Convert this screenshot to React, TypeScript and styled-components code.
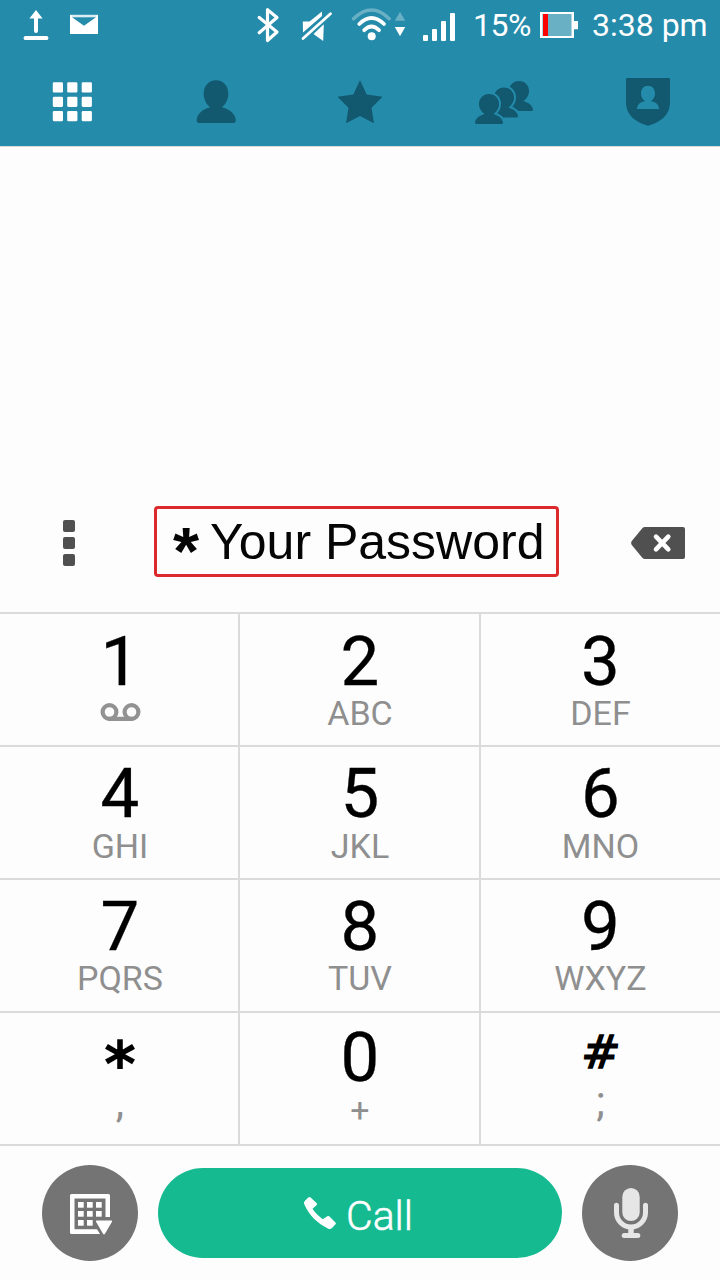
import React from "react";
import styled, { createGlobalStyle } from "styled-components";

const GlobalStyle = createGlobalStyle`
  * { box-sizing: border-box; }
  body { margin: 0; background: #fdfdfd; }
  button { border: 0; padding: 0; margin: 0; background: none; font: inherit; color: inherit; }
  svg { display: block; flex: none; }
`;

const DARK = "#12586e";

const Screen = styled.div`
  width: 720px;
  height: 1280px;
  display: flex;
  flex-direction: column;
  background: #fdfdfd;
  font-family: Roboto, "Liberation Sans", sans-serif;
  overflow: hidden;
`;

const Header = styled.header`
  height: 147px;
  background: #248bab;
  border-bottom: 1px solid #d5dcde;
`;

const StatusBar = styled.div`
  height: 50px;
  display: flex;
  align-items: flex-start;
  color: #fff;
`;

const StatusGroup = styled.div<{ $push?: boolean }>`
  display: flex;
  margin-left: ${(p) => (p.$push ? "auto" : "0")};
`;

const StatusText = styled.span<{ $width: number; $tight?: boolean }>`
  width: ${(p) => p.$width}px;
  font-size: 32px;
  line-height: 50px;
  height: 50px;
  letter-spacing: ${(p) => (p.$tight ? "-0.5px" : "0")};
  white-space: nowrap;
`;

const Tabs = styled.nav`
  display: grid;
  grid-template-columns: repeat(5, 144px);
  height: 96px;
`;

const Tab = styled.button`
  height: 96px;
`;

const EntryArea = styled.section`
  height: 465px;
  display: flex;
  align-items: flex-end;
  padding: 0 35px 35px 63px;
`;

const EntryRow = styled.div`
  flex: 1;
  height: 71px;
  display: flex;
  align-items: center;
`;

const MenuButton = styled.button`
  width: 12px;
  display: flex;
  flex-direction: column;
  gap: 5px;
  margin: 3px 79px 0 0;
`;

const MenuDot = styled.span`
  width: 12px;
  height: 12px;
  border-radius: 2px;
  background: #505050;
`;

const EntryBox = styled.div`
  width: 405px;
  height: 71px;
  border: 3px solid #dc2a2c;
  border-radius: 4px;
  display: flex;
  padding-left: 16px;
  color: #050505;
  font-family: "Liberation Sans", Arial, sans-serif;
  white-space: nowrap;
`;

const EntryStar = styled.span`
  width: 37px;
  font-size: 67px;
  font-weight: 700;
  line-height: 84px;
  height: 65px;
`;

const EntryText = styled.span`
  font-size: 50px;
  line-height: 66px;
  height: 65px;
`;

const DeleteButton = styled.button`
  margin: 3px 0 0 auto;
`;

const Keypad = styled.section`
  display: grid;
  grid-template-columns: 240px 241px 239px;
  grid-auto-rows: 133px;
  height: 534px;
  border-bottom: 2px solid #dbdbdb;
`;

const Key = styled.button<{ $top: number; $column: number }>`
  display: flex;
  flex-direction: column;
  align-items: center;
  border-top: 2px solid #dbdbdb;
  border-right: ${(p) => (p.$column === 2 ? "0" : "2px solid #dbdbdb")};
  padding-top: ${(p) => p.$top}px;
  padding-left: ${(p) => [2, 1, 0][p.$column]}px;
`;

const Digit = styled.span`
  font-size: 69px;
  line-height: 72px;
  height: 72px;
  color: #000;
  -webkit-text-stroke: 0.3px #000;
`;

const Sign = styled(Digit)<{ $size: number; $line: number; $stroke: number; $skew?: number }>`
  font-family: "DejaVu Sans", sans-serif;
  font-size: ${(p) => p.$size}px;
  line-height: ${(p) => p.$line}px;
  -webkit-text-stroke: ${(p) => p.$stroke}px #000;
  transform: skewX(${(p) => p.$skew ?? 0}deg);
`;

const Letters = styled.span<{ $gap?: number; $size?: number }>`
  margin-top: ${(p) => p.$gap ?? 0}px;
  font-size: ${(p) => p.$size ?? 34}px;
  line-height: 33px;
  height: 33px;
  color: #8f8f8f;
`;

const Actions = styled.footer`
  height: 134px;
  display: flex;
  align-items: center;
  padding-left: 42px;
  gap: 20px;
`;

const RoundButton = styled.button`
  width: 96px;
  height: 96px;
  border-radius: 50%;
  background: #747474;
`;

const CallButton = styled.button`
  width: 404px;
  height: 90px;
  border-radius: 45px;
  background: #15ba91;
  color: #fff;
  display: flex;
  align-items: center;
  padding-left: 146px;
`;

const CallLabel = styled.span`
  margin: 5px 0 0 10px;
  font-size: 41px;
  font-weight: 300;
  line-height: 50px;
  -webkit-text-stroke: 0.5px #fff;
`;

const NoticeIcons = () => (
  <svg width="110" height="50" viewBox="0 0 110 50" fill="#fff">
    <path d="M36 10 42.6 18.6H38V31Q38 33 36 33T34 31V18.6H29.4Z" />
    <rect x="23.7" y="36" width="24.6" height="4" rx="1.6" />
    <path d="M70 14.8H98V34H70Z" />
    <path d="M72 17.3H96L84 25.8Z" fill="#248bab" />
    <path d="M71.5 16H96.5" stroke="#b5dbe6" strokeWidth="1" />
  </svg>
);

const SignalIcons = () => (
  <svg width="223" height="50" viewBox="250 0 223 50" fill="none" stroke="#fff" strokeLinecap="round" strokeLinejoin="round">
    <path d="M259.2 17.5 277 32 267.5 40.5V9.7L277 17.5 259.2 32.8" strokeWidth="3.2" />
    <path d="M302.8 21.5H309.5L322 11.5V16L303 32.5Z" fill="#fff" stroke="none" />
    <path d="M313.5 34 323.8 24.3 323.2 41Z" fill="#fff" stroke="none" />
    <path d="M303 38.5 330.5 13.8" strokeWidth="2.8" />
    <path d="M353.5 18.8Q371.5 1.2 389.2 18.8" stroke="#69b0c5" strokeWidth="3.4" />
    <path d="M359.3 24Q371.5 12 384 24" strokeWidth="3.8" />
    <path d="M364.2 30.2Q371.5 23 379 30.2" strokeWidth="3.8" />
    <circle cx="371.7" cy="36.3" r="4" fill="#fff" stroke="none" />
    <path d="M400 11.8 405.2 20.8H394.8Z" fill="#69b0c5" stroke="none" />
    <path d="M394.8 27H405.2L400 36.3Z" fill="#fff" stroke="none" />
    <g fill="#fff" stroke="none">
      <rect x="423" y="35" width="5" height="6" rx="1" />
      <rect x="432" y="29" width="5" height="12" rx="1" />
      <rect x="441" y="21" width="5" height="20" rx="1" />
      <rect x="450" y="13" width="5" height="28" rx="1" />
    </g>
  </svg>
);

const BatteryIcon = () => (
  <svg width="56" height="50" viewBox="536 0 56 50">
    <path d="M540 12H574V21H578V29.3H574V38H540Z" fill="#fff" />
    <rect x="542.5" y="14" width="29" height="22" fill="#69b0c5" />
    <rect x="543" y="14" width="5" height="22" fill="#fa0300" />
  </svg>
);

const GridIcon = () => (
  <svg width="144" height="96" viewBox="0 50 144 96" fill="#fff">
    {[82.3, 96.7, 111].map((y) =>
      [52.8, 67.2, 81.7].map((x) => <rect key={`${x}-${y}`} x={x} y={y} width="10.2" height="10.2" rx="1.3" />)
    )}
  </svg>
);

const PersonIcon = () => (
  <svg width="144" height="96" viewBox="144 50 144 96" fill={DARK}>
    <path d="M216 80.2C223.500 80.200 228.300 86 228.300 93.800 228.300 100.500 225 104.800 221.700 107.300 229.500 109 235.800 114.500 235.800 120.500Q235.800 123 233.500 123H199Q196.700 123 196.700 120.500C196.700 114.500 202.500 109 210.300 107.300 207 104.800 203.700 100.500 203.700 93.800 203.700 86 208.500 80.200 216 80.200Z" />
  </svg>
);

const StarIcon = () => (
  <svg width="144" height="96" viewBox="288 50 144 96" fill={DARK}>
    <path d="M360 80.300 366.700 94.500 382.500 96.700 371.500 107.700 374 123.300 360 116 346 123.300 348.500 107.700 337.500 96.700 353.300 94.500Z" />
  </svg>
);

const groupFigure =
  "M489 94C495 94 499 98.500 499 104 499 108.500 496.500 111.800 493.500 114 498.500 115.500 502.500 118.500 503 122.500Q503 124 501.500 124H476.500Q475 124 475 122.500C475.500 118.500 479.500 115.500 484.500 114 481.500 111.800 479 108.500 479 104 479 98.500 483 94 489 94Z";

const GroupIcon = () => (
  <svg width="144" height="96" viewBox="432 50 144 96" fill={DARK}>
    <path d={groupFigure} transform="translate(30 -13)" />
    <path d={groupFigure} transform="translate(15 -6.500)" stroke="#248bab" strokeWidth="4" />
    <path d={groupFigure} transform="translate(15 -6.500)" />
    <path d={groupFigure} stroke="#248bab" strokeWidth="4" />
    <path d={groupFigure} />
  </svg>
);

const ShieldIcon = () => (
  <svg width="144" height="96" viewBox="576 50 144 96">
    <path d="M627 78H669Q670 78 670 79V102C670 115.500 660 122.500 648 125.700 636 122.500 626 115.500 626 102V79Q626 78 627 78Z" fill={DARK} />
    <path d="M648 85.800C652.500 85.800 655 89.300 655 93.500 655 96.800 653.500 99.500 650.800 101 655.500 101.800 659 104.500 659 108.900H637C637 104.500 640.500 101.800 645.200 101 642.500 99.500 641 96.800 641 93.500 641 89.300 643.500 85.800 648 85.800Z" fill="#248bab" />
  </svg>
);

const BackspaceIcon = () => (
  <svg width="54" height="32" viewBox="631 527 54 32">
    <path d="M645 527H683Q685 527 685 529V557Q685 559 683 559H645Q643.500 559 642.500 558L631.800 545Q630.500 543 631.800 541L642.500 528Q643.500 527 645 527Z" fill="#505050" />
    <path d="M656 536.700 668.300 549.300M668.300 536.700 656 549.300" stroke="#fff" strokeWidth="4.600" strokeLinecap="round" />
  </svg>
);

const VoicemailIcon = () => (
  <svg width="42" height="20" viewBox="99.5 702 42 20" fill="none" stroke="#929292" strokeWidth="4.200" strokeLinecap="round">
    <circle cx="110" cy="712" r="6.900" />
    <circle cx="132" cy="712" r="6.900" />
    <path d="M110 718.900H132" />
  </svg>
);

const HideKeypadIcon = () => (
  <svg width="96" height="96" viewBox="42 1165 96 96" fill="#fff">
    <path fillRule="evenodd" d="M71.500 1194H108.500Q110 1194 110 1195.500V1217H105.500V1198.500H74.500V1229.300H97L100 1234H71.500Q70 1234 70 1232.500V1195.500Q70 1194 71.500 1194Z" />
    {[1202, 1211, 1220].map((y) =>
      [78, 87, 96].map((x) =>
        x === 96 && y === 1220 ? null : <rect key={`${x}-${y}`} x={x} y={y} width="5.700" height="5.700" />
      )
    )}
    <path d="M96.500 1220.500H111.500Q112.500 1220.800 112 1221.800L104.800 1234Q104 1234.800 103.200 1234L96 1221.800Q95.500 1220.800 96.500 1220.500Z" />
  </svg>
);

const PhoneIcon = () => (
  <svg width="32" height="34" viewBox="304 1196 32 34" fill="#fff">
    <path d="M308.300 1197.400Q309.500 1196.400 310.600 1197.500L316.500 1203Q317.500 1204.200 316.500 1205.300L312.500 1208.800C314.800 1212.500 318.500 1216.200 322.800 1219.300L327.300 1216.300Q328.400 1215.500 329.500 1216.500L335.200 1222.300Q336.400 1223.500 335.300 1224.600L332 1228Q330.500 1229.500 328.300 1228.700C317.500 1223.500 309 1215.500 304.300 1204.300Q303.500 1202.300 305 1200.800Z" />
  </svg>
);

const MicIcon = () => (
  <svg width="96" height="96" viewBox="582 1165 96 96" fill="none" stroke="#e6e6e6">
    <rect x="622.300" y="1188" width="17.400" height="33" rx="8.700" fill="#e6e6e6" stroke="none" />
    <path d="M616.500 1205.300V1212.500A14.500 14.500 0 0 0 645.500 1212.500V1205.300" strokeWidth="5" strokeLinecap="round" />
    <path d="M631 1227V1235" strokeWidth="5.500" />
    <path d="M624.200 1235.500H637.800" strokeWidth="5" strokeLinecap="round" />
  </svg>
);

type KeyDef = { digit: string; letters: string; top: number; gap?: number; size?: number };

const KEYS: KeyDef[] = [
  { digit: "1", letters: "", top: 12, gap: 4 },
  { digit: "2", letters: "ABC", top: 12, gap: -1 },
  { digit: "3", letters: "DEF", top: 12, gap: -1 },
  { digit: "4", letters: "GHI", top: 11 },
  { digit: "5", letters: "JKL", top: 11 },
  { digit: "6", letters: "MNO", top: 11 },
  { digit: "7", letters: "PQRS", top: 11, gap: -1 },
  { digit: "8", letters: "TUV", top: 11, gap: -1 },
  { digit: "9", letters: "WXYZ", top: 11, gap: -1 },
  { digit: "*", letters: ",", top: 9, gap: -8, size: 42 },
  { digit: "0", letters: "+", top: 9 },
  { digit: "#", letters: ";", top: 9, gap: -9, size: 43 },
];

export default function App() {
  return (
    <Screen>
      <GlobalStyle />
      <Header>
        <StatusBar>
          <NoticeIcons />
          <StatusGroup $push>
            <SignalIcons />
            <StatusText $width={63} $tight>15%</StatusText>
            <BatteryIcon />
            <StatusText $width={128}>3:38 pm</StatusText>
          </StatusGroup>
        </StatusBar>
        <Tabs>
          <Tab aria-label="Keypad"><GridIcon /></Tab>
          <Tab aria-label="Contacts"><PersonIcon /></Tab>
          <Tab aria-label="Favorites"><StarIcon /></Tab>
          <Tab aria-label="Groups"><GroupIcon /></Tab>
          <Tab aria-label="VIP"><ShieldIcon /></Tab>
        </Tabs>
      </Header>
      <EntryArea>
        <EntryRow>
          <MenuButton aria-label="Menu">
            <MenuDot />
            <MenuDot />
            <MenuDot />
          </MenuButton>
          <EntryBox>
            <EntryStar>*</EntryStar>
            <EntryText>Your Password</EntryText>
          </EntryBox>
          <DeleteButton aria-label="Delete"><BackspaceIcon /></DeleteButton>
        </EntryRow>
      </EntryArea>
      <Keypad>
        {KEYS.map((k, i) => (
          <Key key={k.digit} $top={k.top} $column={i % 3}>
            {k.digit === "*" ? (
              <Sign $size={61} $line={84} $stroke={2.2}>*</Sign>
            ) : k.digit === "#" ? (
              <Sign $size={46} $line={61} $stroke={1.5} $skew={-5}>#</Sign>
            ) : (
              <Digit>{k.digit}</Digit>
            )}
            <Letters $gap={k.gap} $size={k.size}>
              {k.digit === "1" ? <VoicemailIcon /> : k.letters}
            </Letters>
          </Key>
        ))}
      </Keypad>
      <Actions>
        <RoundButton aria-label="Hide keypad"><HideKeypadIcon /></RoundButton>
        <CallButton>
          <PhoneIcon />
          <CallLabel>Call</CallLabel>
        </CallButton>
        <RoundButton aria-label="Voice"><MicIcon /></RoundButton>
      </Actions>
    </Screen>
  );
}
